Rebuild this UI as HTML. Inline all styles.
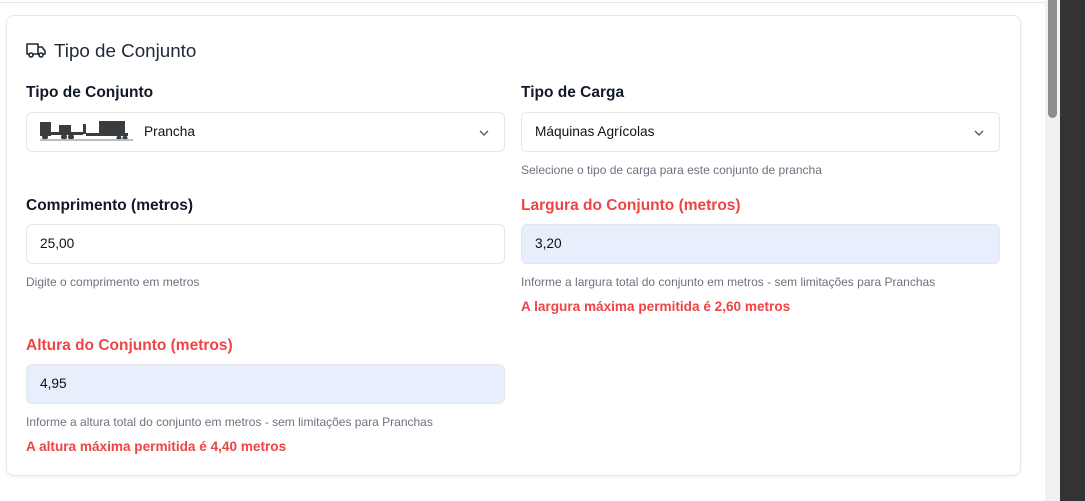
<!DOCTYPE html>
<html><head><style>
*{box-sizing:border-box;margin:0;padding:0}
body{width:1085px;height:501px;background:#fff;font-family:"Liberation Sans",sans-serif;position:relative;overflow:hidden;color:#111827}
.topline{position:absolute;left:0;top:0;width:1045px;height:3px;border-bottom:1px solid #e5e7eb}
.sb{position:absolute;left:1045px;top:0;width:15px;height:501px;background:#f1f1f1}
.thumb{position:absolute;left:1048px;top:0;width:9px;height:118px;background:#8c8c8c;border-radius:0 0 5px 5px}
.dark{position:absolute;left:1060px;top:0;width:25px;height:501px;background:#333}
.card{position:absolute;left:6px;top:15px;width:1015px;height:461px;border:1px solid #e5e7eb;border-radius:8px;box-shadow:0 1px 2px rgba(0,0,0,.06)}
.abs{position:absolute;white-space:nowrap}
.title{font-size:18.8px;left:54px;top:40px;color:#1f2937}
.lbl{font-size:15.5px;font-weight:bold;color:#111827}
.red{color:#ef4444}
.inp{position:absolute;width:479px;height:40px;border:1px solid #e5e7eb;border-radius:6px;font-size:13.7px;padding-left:13px;line-height:38px;color:#111}
.blue{background:#e8effc}
.help{font-size:12px;color:#6b7280}
.err{font-size:13.6px;font-weight:bold;color:#ef4444}
.chev{position:absolute;right:14px;top:14px}
</style></head><body>
<div class="topline"></div>
<div class="card"></div>
<svg class="abs" style="left:26px;top:41px" width="20" height="18" viewBox="0 0 20 18" fill="none" stroke="#1f2937" stroke-width="1.6" stroke-linejoin="round"><path d="M1 3h11v10H1zM12 6h4l3 4v3h-7z"/><circle cx="5" cy="14" r="2" fill="#fff"/><circle cx="15" cy="14" r="2" fill="#fff"/></svg>
<div class="abs title">Tipo de Conjunto</div>
<div class="abs lbl" style="left:26px;top:84px">Tipo de Conjunto</div>
<div class="inp" style="left:26px;top:112px;padding-left:117px">Prancha
<svg class="chev" width="12" height="12" viewBox="0 0 12 12"><path d="M2 4l4 4 4-4" stroke="#555" stroke-width="1.3" fill="none"/></svg></div>
<svg class="abs" style="left:39px;top:119px" width="95" height="24" viewBox="0 0 95 24" fill="#3a3d3f"><rect x="1" y="3" width="11" height="14"/><rect x="12" y="13" width="20" height="3"/><rect x="20" y="6" width="12" height="8"/><rect x="32" y="13" width="12" height="3"/><rect x="44" y="5" width="3" height="10"/><rect x="47" y="14" width="42" height="3"/><rect x="60" y="2" width="26" height="12"/><circle cx="6" cy="18" r="3"/><circle cx="25" cy="18" r="3"/><circle cx="32" cy="18" r="3"/><circle cx="80" cy="19" r="2.5"/><circle cx="86" cy="19" r="2.5"/><rect x="1" y="20" width="93" height="2" fill="#bbb"/></svg>
<div class="abs lbl" style="left:521px;top:84px">Tipo de Carga</div>
<div class="inp" style="left:521px;top:112px">Máquinas Agrícolas
<svg class="chev" width="12" height="12" viewBox="0 0 12 12"><path d="M2 4l4 4 4-4" stroke="#555" stroke-width="1.3" fill="none"/></svg></div>
<div class="abs help" style="left:521px;top:163px">Selecione o tipo de carga para este conjunto de prancha</div>
<div class="abs lbl" style="left:26px;top:197px">Comprimento (metros)</div>
<div class="inp" style="left:26px;top:224px">25,00</div>
<div class="abs help" style="left:26px;top:275px">Digite o comprimento em metros</div>
<div class="abs lbl red" style="left:521px;top:197px">Largura do Conjunto (metros)</div>
<div class="inp blue" style="left:521px;top:224px">3,20</div>
<div class="abs help" style="left:521px;top:275px">Informe a largura total do conjunto em metros - sem limitações para Pranchas</div>
<div class="abs err" style="left:521px;top:299px">A largura máxima permitida é 2,60 metros</div>
<div class="abs lbl red" style="left:26px;top:337px">Altura do Conjunto (metros)</div>
<div class="inp blue" style="left:26px;top:364px">4,95</div>
<div class="abs help" style="left:26px;top:415px">Informe a altura total do conjunto em metros - sem limitações para Pranchas</div>
<div class="abs err" style="left:26px;top:439px">A altura máxima permitida é 4,40 metros</div>
<div class="sb"></div><div class="thumb"></div><div class="dark"></div>
</body></html>
